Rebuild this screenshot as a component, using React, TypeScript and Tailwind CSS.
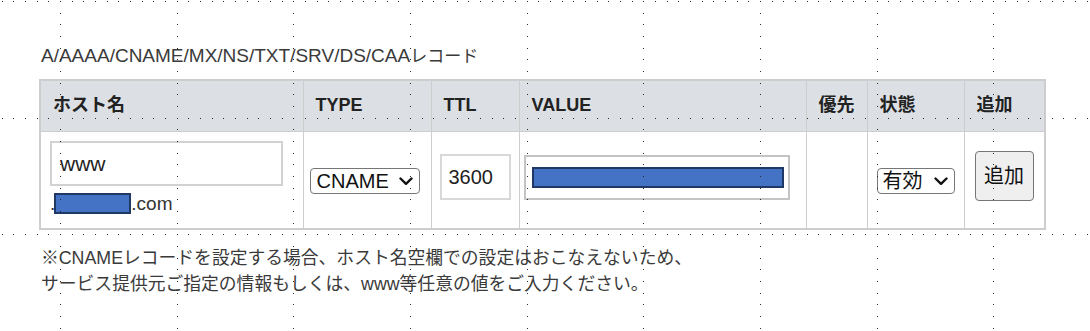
import type { ReactNode } from "react";

const GRID = 350 / 3;
const DOT = GRID / 10;

const DotGrid = () => {
  const dots: ReactNode[] = [];
  // horizontal guide lines
  for (let r = 0; r < 3; r++) {
    const y = Math.round(1 + r * GRID);
    for (let j = -5; j <= 88; j++) {
      const x = Math.round(60 + j * DOT);
      dots.push(<rect key={`h${r}-${j}`} x={x} y={y} width={1} height={1} />);
    }
  }
  // vertical guide lines
  for (let c = 0; c < 9; c++) {
    const x = Math.round(60 + c * GRID);
    for (let j = 0; j <= 28; j++) {
      const y = Math.round(1 + j * DOT);
      dots.push(<rect key={`v${c}-${j}`} x={x} y={y} width={1} height={1} />);
    }
  }
  return (
    <svg
      className="absolute inset-0 pointer-events-none"
      width={1090}
      height={331}
      fill="#2a2a2a"
      shapeRendering="crispEdges"
    >
      {dots}
    </svg>
  );
};

const Chevron = () => (
  <svg
    className="absolute right-[7px] top-[9px] pointer-events-none"
    width="14"
    height="9"
    viewBox="0 0 14 9"
    fill="none"
    stroke="#111"
    strokeWidth="2.4"
    strokeLinecap="round"
    strokeLinejoin="round"
  >
    <path d="M1.5 1.5 L7 6.8 L12.5 1.5" />
  </svg>
);

const Masked = ({ className }: { className: string }) => (
  <span
    className={`inline-block bg-[#4472c4] border-2 border-[#1f3864] ${className}`}
  />
);

const headers = [
  { label: "ホスト名", w: "w-[263px]" },
  { label: "TYPE", w: "w-[128px]" },
  { label: "TTL", w: "w-[88px]" },
  { label: "VALUE", w: "w-[287px]" },
  { label: "優先", w: "w-[61px]" },
  { label: "状態", w: "w-[97px]" },
  { label: "追加", w: "w-[81px]" },
];

const App = () => {
  return (
    <div
      className="relative w-[1090px] h-[331px] bg-white overflow-hidden text-[#333]"
      style={{ fontFamily: '"Liberation Sans", "Noto Sans CJK JP", sans-serif' }}
    >
      <div className="pl-[41px] pt-[44px]">
        {/* title */}
        <div className="h-[24px] leading-[24px] text-[19px] text-[#3a3a3a]">
          A/AAAA/CNAME/MX/NS/TXT/SRV/DS/CAA
          <span className="text-[17px]">レコード</span>
        </div>

        {/* table */}
        <table className="mt-[11px] ml-[-2px] table-fixed border-collapse border-2 border-[#cdcdcd] w-[1005px]">
          <thead>
            <tr className="bg-[#dce0e5]">
              {headers.map((h) => (
                <th
                  key={h.label}
                  className={`${h.w} h-[51px] border border-[#cdcdcd] px-[12px] text-left align-middle text-[18px] font-bold text-[#222]`}
                >
                  {h.label}
                </th>
              ))}
            </tr>
          </thead>
          <tbody>
            <tr>
              {/* host */}
              <td className="h-[98px] border border-[#cdcdcd] pl-[9px] align-middle">
                <div className="flex flex-col mt-[-4px]">
                  <div className="w-[233px] h-[45px] border-2 border-[#d2d2d2] flex items-center pl-[8px] text-[21px] text-[#222]">
                    www
                  </div>
                  <div className="flex items-center mt-[7px] h-[21px] text-[19px] text-[#333]">
                    <span className="leading-none">.</span>
                    <Masked className="w-[77px] h-[21px] ml-[-1px]" />
                    <span className="leading-none">.com</span>
                  </div>
                </div>
              </td>

              {/* type */}
              <td className="border border-[#cdcdcd] pl-[6px] align-middle">
                <div className="relative w-[110px] h-[26px] mt-[3px]">
                  <select
                    defaultValue="CNAME"
                    className="appearance-none w-full h-full border border-[#767676] rounded-[4px] bg-white pl-[6px] text-[20px] leading-[24px] text-[#111]"
                  >
                    <option>A</option>
                    <option>AAAA</option>
                    <option>CNAME</option>
                    <option>MX</option>
                    <option>NS</option>
                    <option>TXT</option>
                    <option>SRV</option>
                    <option>DS</option>
                    <option>CAA</option>
                  </select>
                  <Chevron />
                </div>
              </td>

              {/* ttl */}
              <td className="border border-[#cdcdcd] pl-[8px] align-middle">
                <div className="w-[71px] h-[46px] border-2 border-[#d8d8d8] flex items-center pl-[7px] text-[20px] text-[#222] mt-[-5px]">
                  3600
                </div>
              </td>

              {/* value */}
              <td className="border border-[#cdcdcd] pl-[4px] align-middle">
                <div className="w-[266px] h-[45px] border-2 border-[#c4c4c4] flex items-center pl-[6px] mt-[-5px]">
                  <Masked className="w-[252px] h-[21px]" />
                </div>
              </td>

              {/* priority */}
              <td className="border border-[#cdcdcd]" />

              {/* status */}
              <td className="border border-[#cdcdcd] pl-[9px] align-middle">
                <div className="relative w-[78px] h-[26px] mt-[3px]">
                  <select
                    defaultValue="有効"
                    className="appearance-none w-full h-full border border-[#767676] rounded-[4px] bg-white pl-[5px] text-[20px] leading-[24px] text-[#111]"
                  >
                    <option>有効</option>
                    <option>無効</option>
                  </select>
                  <Chevron />
                </div>
              </td>

              {/* add */}
              <td className="border border-[#cdcdcd] pl-[10px] align-middle">
                <button className="w-[59px] h-[50px] border border-[#767676] rounded-[4px] bg-[#efefef] text-[20px] text-[#111] mt-[-7px]">
                  追加
                </button>
              </td>
            </tr>
          </tbody>
        </table>

        {/* note */}
        <div className="mt-[15px] text-[17.8px] leading-[26px] text-[#3a3a3a]">
          <p>※CNAMEレコードを設定する場合、ホスト名空欄での設定はおこなえないため、</p>
          <p>サービス提供元ご指定の情報もしくは、www等任意の値をご入力ください。</p>
        </div>
      </div>
      <DotGrid />
    </div>
  );
};

export default App;
